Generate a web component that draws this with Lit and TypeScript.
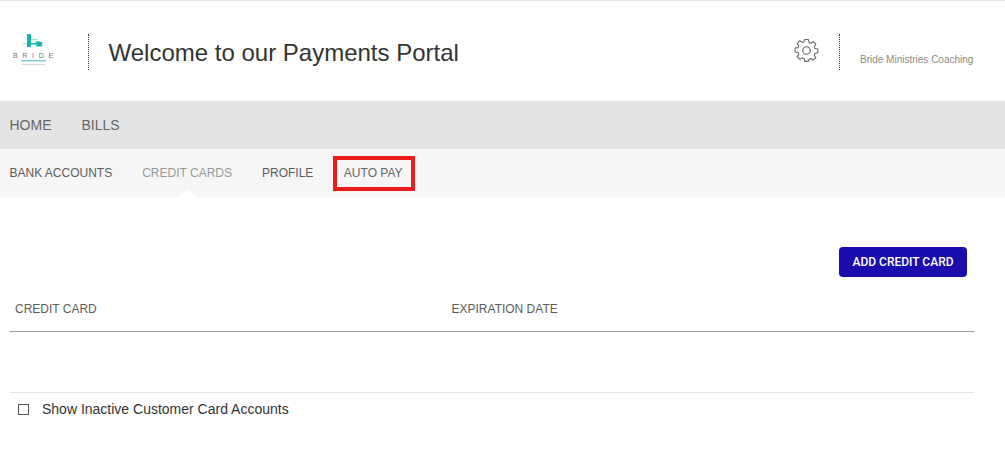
import { LitElement, html, css } from "lit";
import { customElement } from "lit/decorators.js";

@customElement("app-root")
export class AppRoot extends LitElement {
  static styles = css`
    :host { display: block; width: 1005px; height: 454px; overflow: hidden; background: #fff; font-family: "Liberation Sans", sans-serif; color: #666; }
    .header { border-top: 1px solid #e4e4e4; display: flex; align-items: center; box-sizing: border-box; height: 101px; }
    .logo { width: 42px; margin-left: 13px; margin-top: 0; flex: none; }
    .logo svg { display: block; }
    .bride { font: 7px/7px "Liberation Sans", sans-serif; letter-spacing: 4.7px; color: #6d7684; white-space: nowrap; }
    .sep { width: 0; height: 36px; border-left: 1px dotted #333; flex: none; margin-top: 2px; }
    .sep.a { margin-left: 33px; }
    h1 { margin: 4px 0 0 19.5px; font: 400 24px/30px "Liberation Sans", sans-serif; color: #333; flex: 1; white-space: nowrap; }
    .gear { display: block; margin-right: 20px; margin-top: -2px; margin-left: -2px; }
    .client { width: 134px; padding-left: 20px; box-sizing: border-box; margin-right: 31px; font: 10px/12px "Liberation Sans", sans-serif; color: #8b8b80; margin-top: 18px; white-space: nowrap; }
    .nav { height: 48px; background: #e4e4e4; display: flex; align-items: center; gap: 30px; padding-left: 9.5px; font-size: 14px; color: #666; }
    .sub { height: 48px; background: #f6f6f6; display: flex; align-items: center; padding-left: 9.5px; font-size: 12px; line-height: 14px; color: #5c5c5c; }
    .sub span.item { margin-right: 30px; }
    .sub .active { color: #999; position: relative; }
    .sub .active::after { content: ""; position: absolute; left: 50%; margin-left: -8px; top: 23px; border: 8px solid transparent; border-top: 0; border-bottom-color: #fff; }
    .sub span.boxed { outline: 4px solid #ec1c1c; line-height: 27px; padding: 0 8px 0 6.5px; margin-left: -6px; margin-right: 0; color: #666; }
    .main { padding: 50px 31px 0 10px; }
    .actions { display: flex; justify-content: flex-end; padding-right: 7px; }
    button { width: 128px; height: 30px; border: 0; border-radius: 4px; background: #1b0cae; color: #fff; font: 500 12px/30px Roboto, sans-serif; padding: 0; }
    .thead { display: grid; grid-template-columns: 436.5px 1fr; padding: 25px 5px 0; height: 55px; box-sizing: border-box; align-items: start; border-bottom: 1px solid #999; font-size: 12px; line-height: 14px; color: #5c5c5c; }
    .foot { margin-top: 60px; border-top: 1px solid #e4e4e4; display: flex; align-items: center; padding: 8px 0 0 8px; font: 14px/17px "Liberation Sans", sans-serif; color: #333; }
    .box { width: 9px; height: 9px; border: 1px solid #555; margin-right: 13px; flex: none; }
  `;
  render() {
    return html`
      <div class="header">
        <div class="logo">
          <svg width="42" height="18" viewBox="0 0 42 18" aria-hidden="true">
            <rect x="14" y="0" width="4" height="13" fill="#14b3ab"/>
            <path d="M10 9h4v1h-4zM18 5h7v1h-7z" fill="#9fdedb"/>
            <path d="M18 9h6l-3-1.500h6l3 1.500-1.500 1 1 1-1 1.500h-6l1.500-2H18z" fill="#14b3ab"/>
          </svg>
          <div class="bride">BRIDE</div>
          <svg width="42" height="9" viewBox="0 0 42 9" aria-hidden="true">
            <rect x="8" y="1" width="25" height="1.500" fill="#7fd3cf"/>
            <rect x="9" y="5" width="23" height="1" fill="#d4d6da"/>
          </svg>
        </div>
        <div class="sep a"></div>
        <h1>Welcome to our Payments Portal</h1>
        <svg class="gear" width="25" height="25" viewBox="0 0 24 24" fill="none" stroke="#666" stroke-width="1.1" stroke-linejoin="round" aria-hidden="true">
          <circle cx="12" cy="12" r="3.6"/>
          <path d="M10 1h4l.6 3.100 1.900.8L19.100 3.100 21.900 6l-1.800 2.600.8 1.900L24 11v4l-3.100.5-.8 1.900 1.800 2.600-2.800 2.800-2.600-1.800-1.900.8L14 24h-4l-.6-3.100-1.900-.8L4.900 21.900 2.100 19l1.800-2.600-.8-1.900L0 14v-4l3.100-.5.8-1.900L2.100 5 4.900 2.200 7.500 4l1.900-.8z" transform="translate(1.100 .6) scale(.91)"/>
        </svg>
        <div class="sep b"></div>
        <div class="client">Bride Ministries Coaching</div>
      </div>
      <div class="nav"><span>HOME</span><span>BILLS</span></div>
      <div class="sub">
        <span class="item">BANK ACCOUNTS</span>
        <span class="item active">CREDIT CARDS</span>
        <span class="item">PROFILE</span>
        <span class="item boxed">AUTO PAY</span>
      </div>
      <div class="main">
        <div class="actions"><button>ADD CREDIT CARD</button></div>
        <div class="thead"><span>CREDIT CARD</span><span>EXPIRATION DATE</span></div>
        <div class="foot"><span class="box"></span><span>Show Inactive Customer Card Accounts</span></div>
      </div>
    `;
  }
}
